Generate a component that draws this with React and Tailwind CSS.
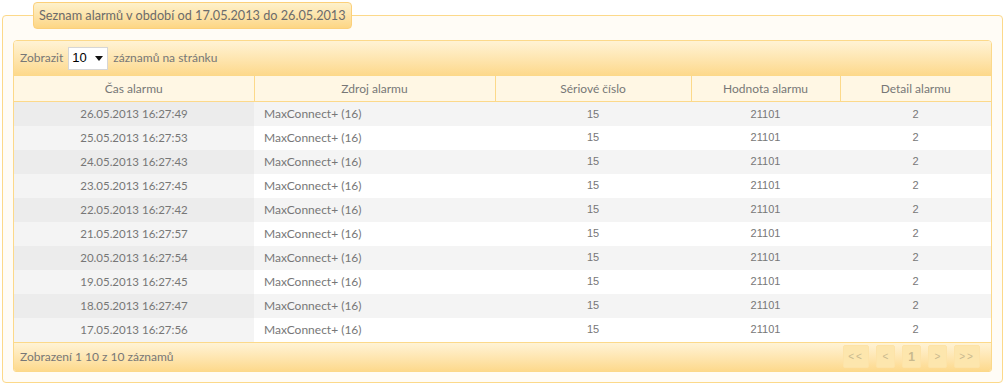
import React from "react";

const rows = [
  "26.05.2013 16:27:49",
  "25.05.2013 16:27:53",
  "24.05.2013 16:27:43",
  "23.05.2013 16:27:45",
  "22.05.2013 16:27:42",
  "21.05.2013 16:27:57",
  "20.05.2013 16:27:54",
  "19.05.2013 16:27:45",
  "18.05.2013 16:27:47",
  "17.05.2013 16:27:56",
];

const headers = ["Čas alarmu", "Zdroj alarmu", "Sériové číslo", "Hodnota alarmu", "Detail alarmu"];

const pages = ["<<", "<", "1", ">", ">>"];

export default function App() {
  return (
    <div className="w-[1006px] h-[385px] bg-white pt-[2px] pl-[2px] font-['Lato',sans-serif] text-[12px] text-[#777]">
      <fieldset className="w-[1001px] border border-[#fcd98a] rounded-[4px] bg-[#fffcf6] px-[10px] pt-[11px] pb-[10px]">
        <legend className="ml-[20px] h-[27px] px-[5px] flex items-center border border-[#fcd07a] rounded-[4px] bg-gradient-to-b from-[#fdf1cc] to-[#fdd684] text-[12.7px] text-[#6b6b6b]">
          Seznam alarmů v období od 17.05.2013 do 26.05.2013
        </legend>

        <div className="border border-[#fcd98a] rounded-t-[4px] rounded-b-[3px] overflow-hidden">
          {/* toolbar */}
          <div className="h-[34px] flex items-center gap-[5px] pl-[6px] bg-gradient-to-b from-[#fff3d5] to-[#fdd98c]">
            <span>Zobrazit</span>
            <div className="w-[40px] h-[23px] bg-white border border-[#d6d6d6] flex items-center justify-between pl-[3px] pr-[4px] font-['Liberation_Sans',sans-serif] text-[13px] text-black">
              <span>10</span>
              <svg width="8" height="5" viewBox="0 0 8 5">
                <path d="M0 0h8L4 5z" fill="#111" />
              </svg>
            </div>
            <span>záznamů na stránku</span>
          </div>

          <table className="w-full table-fixed border-collapse">
            <colgroup>
              <col className="w-[240px]" />
              <col className="w-[241px]" />
              <col className="w-[196px]" />
              <col className="w-[149px]" />
              <col />
            </colgroup>
            <thead>
              <tr className="h-[26px] bg-[#fff7e4] border-y border-[#fcd98a]">
                {headers.map((h, i) => (
                  <th
                    key={h}
                    className={`font-normal text-center p-0 ${i < 4 ? "border-r border-[#fcd98a]" : ""}`}
                  >
                    {h}
                  </th>
                ))}
              </tr>
            </thead>
            <tbody>
              {rows.map((d, i) => {
                const odd = i % 2 === 0;
                return (
                  <tr key={d} className={`h-[24px] ${odd ? "bg-[#f4f4f4]" : "bg-white"}`}>
                    <td className={`text-center p-0 text-[11.5px] ${odd ? "bg-[#ececec]" : "bg-[#f4f4f4]"}`}>{d}</td>
                    <td className="pl-[10px] p-0">MaxConnect+ (16)</td>
                    <td className="text-center p-0 font-['Liberation_Sans',sans-serif] text-[11px]">15</td>
                    <td className="text-center p-0 font-['Liberation_Sans',sans-serif] text-[11px]">21101</td>
                    <td className="text-center p-0 font-['Liberation_Sans',sans-serif] text-[11px]">2</td>
                  </tr>
                );
              })}
            </tbody>
          </table>

          {/* footer */}
          <div className="h-[29px] flex items-center justify-between pl-[6px] pr-[11px] border-t border-[#fcd98a] bg-gradient-to-b from-[#fff3d5] to-[#fdd98c]">
            <span>Zobrazení 1 10 z 10 záznamů</span>
            <div className="flex gap-[7px]">
              {pages.map((p, i) => (
                <div
                  key={i}
                  className={`h-[23px] flex items-center justify-center rounded-[2px] border border-[#fde3a8] bg-[#fde6ad] text-[#c9b98e] font-['Liberation_Sans',sans-serif] ${
                    p === "1" ? "w-[19px] text-[12px] font-bold" : p.length === 2 ? "w-[26px] text-[10px] tracking-[2px]" : "w-[19px] text-[10px]"
                  }`}
                >
                  {p}
                </div>
              ))}
            </div>
          </div>
        </div>
      </fieldset>
    </div>
  );
}
